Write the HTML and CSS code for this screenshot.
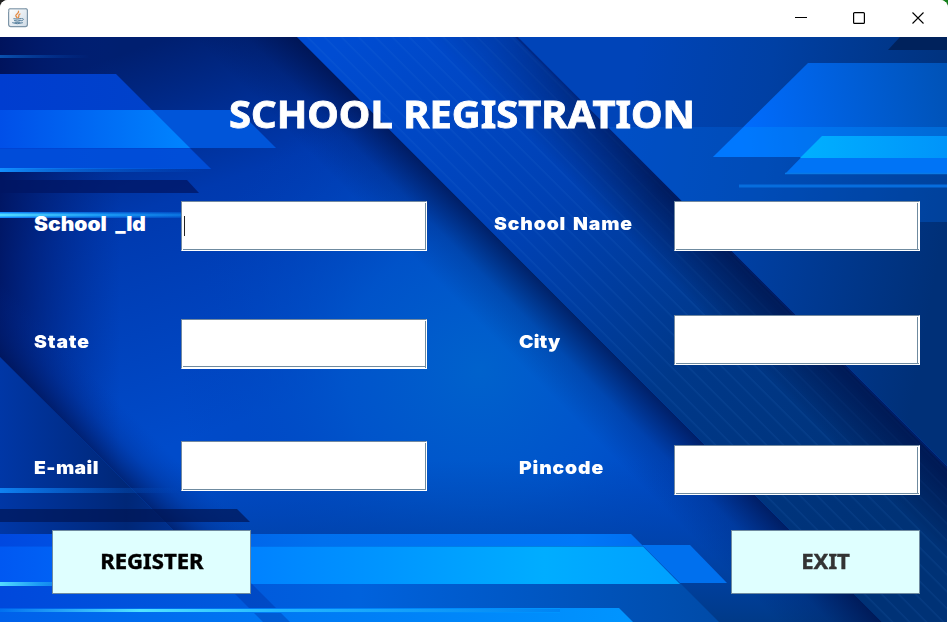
FILE: index.html
```html
<!DOCTYPE html>
<html lang="en">
<head>
<meta charset="utf-8">
<title>School Registration</title>
<link rel="stylesheet" href="styles.css">
</head>
<body>
<div class="window">
  <header class="titlebar">
    <svg class="app-icon" width="20" height="20" viewBox="0 0 20 20">
      <defs><linearGradient id="ic" x1="0" y1="0" x2="1" y2="1"><stop offset="0" stop-color="#fff"/><stop offset="1" stop-color="#cfdbe6"/></linearGradient></defs>
      <rect x=".6" y=".6" width="18.8" height="18" rx="2" fill="url(#ic)" stroke="#7d95a8" stroke-width="1.2"/>
      <path d="M.8 4V2.5Q.8.8 2.5.8H17.500" fill="none" stroke="#a9b8c4"/>
      <g fill="none" stroke-linecap="round">
        <path d="M10.500 3.200C11.500 5 7.500 6 7.800 7.700C8 8.700 9 9 9 10M12 6C9.500 7 11.800 8.300 10.300 9.700" stroke="#e48b45" stroke-width="1.300"/>
        <path d="M5.800 10.800Q9 11.600 13 10.600M6.500 12.600Q9.500 13.600 12.500 12.500M14 10.500C16.500 10.300 15.500 12.600 13.500 12.800M4.600 14.800Q9 16.800 14.500 14.800M7 14.300H12" stroke="#557f9d" stroke-width="1"/>
      </g>
    </svg>
    <svg class="controls" width="132" height="16" viewBox="0 0 132 16">
      <path d="M0 7.500H12" stroke="#000" fill="none"/>
      <rect x="58.600" y="2.600" width="10.800" height="10.800" rx="1" fill="none" stroke="#000" stroke-width="1.200"/>
      <path d="M117.500 2.500L128.500 13.500M128.500 2.500L117.500 13.500" stroke="#000" stroke-width="1.100" fill="none"/>
    </svg>
  </header>
  <main class="panel">
    <svg class="backdrop" viewBox="0 37 948 585" width="948" height="585" aria-hidden="true">
      <defs>
        <linearGradient id="base" gradientUnits="userSpaceOnUse" x1="170" y1="37" x2="300" y2="400"><stop offset="0" stop-color="#001f70"/><stop offset=".4" stop-color="#0039ae"/><stop offset="1" stop-color="#004bca"/></linearGradient>
        <radialGradient id="glow" gradientUnits="userSpaceOnUse" cx="480" cy="370" r="300"><stop offset="0" stop-color="#0062cc"/><stop offset=".45" stop-color="#0056cb" stop-opacity=".8"/><stop offset="1" stop-color="#0040b8" stop-opacity="0"/></radialGradient>
        <linearGradient id="leftDark"><stop offset="0" stop-color="#001058" stop-opacity=".8"/><stop offset="1" stop-color="#002080" stop-opacity="0"/></linearGradient>
        <linearGradient id="lowDark" x1="0" y1="0" x2="0" y2="1"><stop offset="0" stop-color="#003fa0" stop-opacity="0"/><stop offset="1" stop-color="#003a88"/></linearGradient>
        <linearGradient id="band" gradientUnits="userSpaceOnUse" x1="350" y1="37" x2="850" y2="560"><stop offset="0" stop-color="#004cd2"/><stop offset=".35" stop-color="#0041b4"/><stop offset=".65" stop-color="#003889"/><stop offset="1" stop-color="#003276"/></linearGradient>
        <linearGradient id="bandEdge" gradientUnits="userSpaceOnUse" x1="630" y1="240" x2="680" y2="190"><stop offset="0" stop-color="#001040" stop-opacity="0"/><stop offset="1" stop-color="#001048" stop-opacity=".85"/></linearGradient>
        <linearGradient id="edgeFade" gradientUnits="userSpaceOnUse" x1="500" y1="37" x2="660" y2="190"><stop offset="0" stop-color="#555"/><stop offset="1" stop-color="#fff"/></linearGradient>
        <mask id="edgeMask" maskUnits="userSpaceOnUse" x="0" y="37" width="948" height="585"><rect y="37" width="948" height="585" fill="url(#edgeFade)"/></mask>
        <linearGradient id="shade" gradientUnits="userSpaceOnUse" x1="403" y1="247" x2="455" y2="195"><stop offset="0" stop-color="#001048" stop-opacity="0"/><stop offset=".5" stop-color="#001048" stop-opacity=".2"/><stop offset="1" stop-color="#001048" stop-opacity=".75"/></linearGradient>
        <linearGradient id="right" gradientUnits="userSpaceOnUse" x1="620" y1="150" x2="948" y2="210"><stop offset="0" stop-color="#0044b8"/><stop offset=".4" stop-color="#0040a4"/><stop offset="1" stop-color="#003078"/></linearGradient>
        <linearGradient id="topl"><stop offset="0" stop-color="#003dd0"/><stop offset="1" stop-color="#0044c8"/></linearGradient>
        <linearGradient id="bright"><stop offset="0" stop-color="#004fe8"/><stop offset="1" stop-color="#0085ff"/></linearGradient>
        <linearGradient id="r1" gradientUnits="userSpaceOnUse" x1="740" y1="130" x2="948" y2="100"><stop offset="0" stop-color="#006cff"/><stop offset="1" stop-color="#0053b8"/></linearGradient>
        <linearGradient id="r2"><stop offset="0" stop-color="#00b0ff"/><stop offset="1" stop-color="#0094fa"/></linearGradient>
        <linearGradient id="line"><stop offset="0" stop-color="#53dcff"/><stop offset=".35" stop-color="#1b9bf5"/><stop offset="1" stop-color="#0068e0" stop-opacity=".2"/></linearGradient>
        <linearGradient id="line2"><stop offset="0" stop-color="#128fff"/><stop offset="1" stop-color="#0060dd" stop-opacity="0"/></linearGradient>
        <linearGradient id="ll" gradientUnits="userSpaceOnUse" x1="0" y1="450" x2="230" y2="450"><stop offset="0" stop-color="#0037a6"/><stop offset=".55" stop-color="#002777"/><stop offset="1" stop-color="#003dad"/></linearGradient>
        <linearGradient id="llShade" gradientUnits="userSpaceOnUse" x1="100" y1="458" x2="138" y2="420"><stop offset="0" stop-color="#001558" stop-opacity=".7"/><stop offset=".5" stop-color="#002078" stop-opacity=".25"/><stop offset="1" stop-color="#0030a0" stop-opacity="0"/></linearGradient>
        <linearGradient id="b1"><stop offset="0" stop-color="#0048e0"/><stop offset=".5" stop-color="#0070ee"/><stop offset=".9" stop-color="#0078f8"/><stop offset="1" stop-color="#006ef0"/></linearGradient>
        <linearGradient id="b2"><stop offset="0" stop-color="#0058f2"/><stop offset=".35" stop-color="#0080ff"/><stop offset=".8" stop-color="#00adff"/><stop offset="1" stop-color="#00a0ff"/></linearGradient>
        <linearGradient id="b3"><stop offset="0" stop-color="#0048dc"/><stop offset=".5" stop-color="#0062dd"/><stop offset="1" stop-color="#004ba8"/></linearGradient>
        <linearGradient id="b4"><stop offset="0" stop-color="#0060ea"/><stop offset="1" stop-color="#0095ff"/></linearGradient>
        <linearGradient id="b5"><stop offset="0" stop-color="#0070f0"/><stop offset=".25" stop-color="#53e4ff"/><stop offset=".5" stop-color="#23b7ff"/><stop offset="1" stop-color="#0084f4"/></linearGradient>
        <pattern id="stripes" width="12" height="12" patternUnits="userSpaceOnUse" patternTransform="rotate(45)"><rect width="12" height="1.400" fill="#3a86e0" opacity=".12"/></pattern>
      </defs>
      <rect y="37" width="948" height="585" fill="url(#base)"/>
      <rect y="37" width="948" height="585" fill="url(#glow)"/>
      <rect y="37" width="120" height="585" fill="url(#leftDark)"/>
      <path d="M0 460H882V622H0Z" fill="url(#lowDark)"/>
      <path d="M193 37H297L882 622H778Z" fill="url(#shade)"/>
      <path d="M297 37H515L948 470V622H882Z" fill="url(#band)"/>
      <path d="M297 37H515L948 470V622H882Z" fill="url(#stripes)"/>
      <path d="M425 37H518L948 467V567Z" fill="url(#bandEdge)" mask="url(#edgeMask)"/>
      <path d="M518 37H948V467Z" fill="url(#right)"/>
      <path d="M608 127H948V222H703Z" fill="#0065e0" opacity=".35"/>
      <path d="M900 37H948V50H888Z" fill="#002058" opacity=".9"/>
      <path d="M808 63H948V157H713Z" fill="url(#r1)"/>
      <path d="M744 127H948V157H713Z" fill="#008cff" opacity=".4"/>
      <path d="M822 136H948V174H785Z" fill="#0074f6"/>
      <path d="M822 136H948V158H800Z" fill="url(#r2)"/>
      <path d="M785 173.500H948" stroke="#087ae8" stroke-width="1.500" fill="none"/>
      <path d="M739 186H948" stroke="#066ddd" stroke-width="3" fill="none"/>
      <rect y="55" width="90" height="3" fill="url(#line2)" opacity=".5"/>
      <path d="M0 74H116L211 169H0Z" fill="url(#topl)"/>
      <path d="M150 110H238L276 148H188Z" fill="#0055d9"/>
      <path d="M0 110H152L190 148H0Z" fill="url(#bright)"/>
      <path d="M0 148.500H190L211 169H0Z" fill="#0052dc" opacity=".75"/>
      <rect y="168" width="205" height="4" fill="url(#line2)"/>
      <path d="M0 180H187L199 193H0Z" fill="#001663" opacity=".75"/>
      <rect y="212" width="300" height="6" fill="url(#line2)"/>
      <rect y="213.500" width="280" height="3" fill="url(#line)"/>
      <path d="M0 357L265 622H341L0 281Z" fill="url(#llShade)"/>
      <path d="M0 357L265 622H0Z" fill="url(#ll)"/>
      <rect y="488" width="180" height="5" fill="url(#line2)" opacity=".85"/>
      <path d="M0 509H237L250 522H0Z" fill="#001654" opacity=".7"/>
      <path d="M0 534H631L719 622H0Z" fill="url(#b3)"/>
      <path d="M0 534H631L643 546H0Z" fill="url(#b1)"/>
      <path d="M642 545H690L727 583H680Z" fill="#0070ee"/>
      <path d="M0 546.500H643L680 584H0Z" fill="url(#b2)"/>
      <rect y="582" width="110" height="4" fill="url(#line)"/>
      <path d="M0 608H619L633 622H0Z" fill="url(#b4)"/>
      <path d="M235 594L263 622H290L251 583Z" fill="#002b9c" opacity=".35"/>
      <rect y="608" width="560" height="5" fill="url(#b4)"/>
      <rect y="609" width="560" height="3" fill="url(#b5)"/>
    </svg>
    <div class="content">
      <h1 class="title">SCHOOL REGISTRATION</h1>
      <form class="form">
        <div class="column left">
          <div class="row first"><label class="label large">School _Id</label><div class="field"><span class="caret"></span></div></div>
          <div class="row state"><label class="label">State</label><div class="field deep"></div></div>
          <div class="row email"><label class="label">E-mail</label><div class="field"></div></div>
        </div>
        <div class="column right">
          <div class="row first"><label class="label name">School Name</label><div class="field wide"></div></div>
          <div class="row city"><label class="label">City</label><div class="field wide"></div></div>
          <div class="row pin"><label class="label">Pincode</label><div class="field wide"></div></div>
        </div>
      </form>
      <div class="actions">
        <button class="button register" type="button"><span>REGISTER</span></button>
        <button class="button exit" type="button"><span>EXIT</span></button>
      </div>
    </div>
  </main>
</div>
</body>
</html>
```
FILE: styles.css
```css
* { box-sizing: border-box; }
body { margin: 0; background: linear-gradient(90deg, #222 50%, #16801c 50%); overflow: hidden; }
.window { width: 948px; height: 622px; border-radius: 8px 8px 0 0; overflow: hidden; background: #fff; }
.titlebar { height: 37px; display: flex; justify-content: space-between; padding: 8px 21px 0 8px; background: #fff; }
.controls { margin-top: 2px; }
.panel { position: relative; width: 947px; height: 585px; overflow: hidden; background: #0045b8; }
.backdrop { position: absolute; left: 0; top: 0; }
.content { position: relative; display: flex; flex-direction: column; height: 585px; }
.title { margin: 50px 0 0 229px; font: 700 37px/54px "Noto Sans", sans-serif; letter-spacing: 0; -webkit-text-stroke: .8px #fff; color: #fff; white-space: nowrap; transform: scaleX(1.08); transform-origin: left; }
.form { display: flex; justify-content: space-between; margin: 60px 27px 0 34px; height: 294px; }
.column { display: flex; flex-direction: column; }
.left { width: 393px; }
.right { width: 426px; }
.row { display: flex; justify-content: space-between; height: 50px; flex: none; }
.state { margin-top: 68px; }
.email { margin-top: 72px; }
.city { margin-top: 64px; }
.pin { margin-top: 80px; }
.label { height: 26px; font: 900 18px/26px Inter, sans-serif; letter-spacing: .8px; word-spacing: 2px; color: #fff; white-space: nowrap; margin-top: 10px; transform: scaleX(1.075); transform-origin: left; }
.large { font-size: 20px; letter-spacing: 0; word-spacing: 4px; transform: translateY(-.5px) scaleX(1.05); }
.right .label { margin-left: 25px; }
.right .name { margin-left: 0; }
.city .label { margin-top: 14px; letter-spacing: .2px; }
.email .label { margin-top: 14px; letter-spacing: .4px; }
.field { --r: 1px; --b: 1px; width: 246px; height: 50px; padding: 14px 0 0 2px; border: 1px solid #fff; border-top-color: #7289a0; border-left-color: #7289a0;
  background: linear-gradient(#6f8ba0, #6f8ba0) right calc(var(--r) - 1px) top 1px / 1px 47px no-repeat, linear-gradient(#6f8ba0, #6f8ba0) left 1px bottom calc(var(--b) - 1px) / 243px 1px no-repeat, #fff; }
.wide { --r: 2px; }
.deep { --b: 2px; }
.caret { display: block; width: 1px; height: 20px; background: #222; }
.actions { display: flex; justify-content: space-between; margin: 35px 27px 0 52px; }
.button { height: 64px; padding: 0 0 2px; border: 1px solid #6f8ba0; background: #dfffff; color: #000; font: 700 20.5px/60px "Noto Sans", sans-serif; letter-spacing: 0; -webkit-text-stroke: .4px currentColor; }
.button span { display: inline-block; transform: scaleX(1.08); }
.register { width: 199px; }
.exit { width: 189px; color: #333; }
```
